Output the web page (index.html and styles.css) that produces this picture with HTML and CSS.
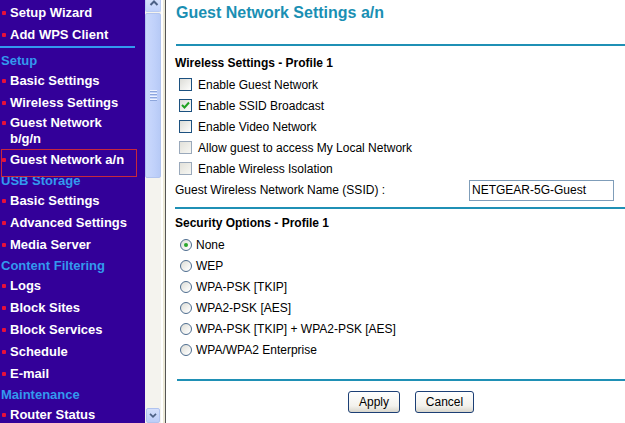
FILE: index.html
```html
<!DOCTYPE html>
<html>
<head>
<meta charset="utf-8">
<link rel="stylesheet" href="styles.css">
</head>
<body>
<div class="page">
  <nav class="nav">
    <div class="item">Setup Wizard</div>
    <div class="item">Add WPS Client</div>
    <div class="sep"></div>
    <div class="head">Setup</div>
    <div class="item">Basic Settings</div>
    <div class="item">Wireless Settings</div>
    <div class="item two">Guest Network<br>b/g/n</div>
    <div class="item current">Guest Network a/n</div>
    <div class="head">USB Storage</div>
    <div class="item">Basic Settings</div>
    <div class="item">Advanced Settings</div>
    <div class="item">Media Server</div>
    <div class="head">Content Filtering</div>
    <div class="item">Logs</div>
    <div class="item">Block Sites</div>
    <div class="item">Block Services</div>
    <div class="item">Schedule</div>
    <div class="item">E-mail</div>
    <div class="head">Maintenance</div>
    <div class="item">Router Status</div>
  </nav>
  <div class="scrollbar">
    <div class="sb-up">
      <svg width="16" height="12" viewBox="0 0 16 12"><path d="M4.5 5 L8 1.5 L11.5 5" fill="none" stroke="#4d6185" stroke-width="2"/></svg>
    </div>
    <div class="sb-thumb"><span></span><span></span><span></span><span></span></div>
    <div class="sb-track"></div>
    <div class="sb-down">
      <svg width="14" height="13" viewBox="0 0 14 13"><path d="M3.5 4.5 L7 8 L10.5 4.5" fill="none" stroke="#4d6185" stroke-width="2"/></svg>
    </div>
  </div>
  <div class="divider"></div>
  <main class="main">
    <div class="title">Guest Network Settings a/n</div>
    <div class="rule r1"></div>
    <div class="sub">Wireless Settings - Profile 1</div>
    <label class="row"><span class="cb"></span>Enable Guest Network</label>
    <label class="row"><span class="cb on"><svg width="11" height="11" viewBox="0 0 11 11"><path d="M2 5 L4.5 7.5 L9 2.5" fill="none" stroke="#21a121" stroke-width="2"/></svg></span>Enable SSID Broadcast</label>
    <label class="row"><span class="cb"></span>Enable Video Network</label>
    <label class="row"><span class="cb dis"></span>Allow guest to access My Local Network</label>
    <label class="row"><span class="cb dis"></span>Enable Wireless Isolation</label>
    <div class="ssid"><span>Guest Wireless Network Name (SSID) :</span><span class="input">NETGEAR-5G-Guest</span></div>
    <div class="rule r2"></div>
    <div class="sub s2">Security Options - Profile 1</div>
    <label class="row rrow"><span class="rb on"></span>None</label>
    <label class="row rrow"><span class="rb"></span>WEP</label>
    <label class="row rrow"><span class="rb"></span>WPA-PSK [TKIP]</label>
    <label class="row rrow"><span class="rb"></span>WPA2-PSK [AES]</label>
    <label class="row rrow"><span class="rb"></span>WPA-PSK [TKIP] + WPA2-PSK [AES]</label>
    <label class="row rrow"><span class="rb"></span>WPA/WPA2 Enterprise</label>
    <div class="rule r3"></div>
    <div class="buttons">
      <span class="btn apply">Apply</span>
      <span class="btn cancel">Cancel</span>
    </div>
  </main>
</div>
</body>
</html>
```

FILE: styles.css
```css
* { box-sizing: border-box; }
html, body { margin: 0; padding: 0; background: #fff; }
body { width: 625px; height: 423px; overflow: hidden; font-family: "Liberation Sans", Arial, sans-serif; }
.page { display: flex; width: 625px; height: 423px; }

.nav {
  width: 145px; flex: none; height: 423px; overflow: hidden;
  background: #330099; padding-top: 2px;
  font-size: 13px; font-weight: bold; color: #fff;
}
.item { position: relative; height: 22px; line-height: 22px; padding-left: 10px; white-space: nowrap; }
.item::before {
  content: ""; position: absolute; left: 2px; top: 9px; width: 4px; height: 4px;
  background: #e8103a; border-radius: 1px;
}
.item.two { height: 35px; line-height: 16px; padding-top: 1px; }
.item.two::before { top: 7px; }
.item.current::after {
  content: ""; position: absolute; left: 1px; top: 0; width: 134px; height: 26px;
  border: 1px solid #c8283c;
}
.head { height: 19px; line-height: 19px; padding-left: 1px; color: #3399ee; white-space: nowrap; }
.sep { width: 135px; height: 2px; background: #3399ee; margin: 0 0 3px; }

.scrollbar { width: 16px; flex: none; display: flex; flex-direction: column; background: #f4f3ee; }
.sb-up {
  height: 12px; background: linear-gradient(#d5e0fb, #c2d3fb); border: 1px solid #b9cbf3; border-top: none;
  border-radius: 0 0 2px 2px;
}
.sb-up svg { display: block; }
.sb-thumb {
  margin-top: 1px; height: 165px; background: linear-gradient(90deg, #cbd9fc, #c0d1fa 60%, #b7caf6);
  border: 1px solid #b2c4ee; border-radius: 2px;
  display: flex; flex-direction: column; align-items: center; justify-content: center; gap: 1px;
}
.sb-thumb span { width: 7px; height: 1px; background: #eef3fe; box-shadow: 0 1px 0 #8da6dc; margin-bottom: 1px; }
.sb-track { flex: 1; }
.sb-down {
  height: 15px; margin: 0 1px; background: linear-gradient(#d5e0fb, #bccdf8); border: 1px solid #b0c3ef;
  border-radius: 2px; display: flex; align-items: center; justify-content: center;
}
.divider { width: 5px; flex: none; background: #fff; border-left: 2px solid #fff; border-right: 1px solid #555; box-shadow: inset -2px 0 0 #ece9d8; }

.main { flex: 1; padding-left: 9px; font-size: 12px; color: #000; }
.title { height: 26px; line-height: 26px; padding-left: 1px; font-size: 16px; font-weight: bold; color: #1a8fb3; }
.rule { height: 2px; background: #1f90b5; }
.r1 { margin-top: 18px; margin-left: 1px; }
.sub { margin-top: 7px; height: 21px; line-height: 21px; font-weight: bold; }
.row { display: flex; align-items: center; height: 21px; padding-left: 4px; }
.cb {
  width: 13px; height: 13px; border: 1px solid #1c5180; margin-right: 6px;
  background: linear-gradient(135deg, #dcdcd7, #f7f7f5 80%, #fff);
  display: flex; align-items: center; justify-content: center;
}
.cb.dis { border-color: #9aa9bb; background: linear-gradient(135deg, #e2e1da, #f7f7f3); }
.cb svg { display: block; }
.ssid { display: flex; align-items: center; height: 22px; }
.input {
  margin-left: auto; margin-right: 11px; width: 145px; height: 21px; line-height: 19px;
  border: 1px solid #7f9db9; padding-left: 2px;
}
.r2 { margin-top: 6px; }
.s2 { margin-top: 4px; }
.rrow { padding-left: 5px; }
.rb {
  width: 12px; height: 12px; border-radius: 50%; border: 1px solid #4e6d8f; margin-right: 4px;
  background: linear-gradient(135deg, #dcdcd5, #fbfbfa 80%);
  display: flex; align-items: center; justify-content: center;
}
.rb.on::after { content: ""; width: 4px; height: 4px; border-radius: 50%; background: #2aa72a; }
.r3 { margin-top: 19px; margin-left: 2px; }
.buttons { display: flex; gap: 15px; margin-top: 10px; padding-left: 173px; }
.btn {
  height: 22px; line-height: 20px; text-align: center; font-size: 12px;
  border: 1px solid #1c3f75; border-radius: 3px;
  background: linear-gradient(#ffffff, #f2f1ec 70%, #d8d6cc);
}
.apply { width: 52px; }
.cancel { width: 59px; }
```
